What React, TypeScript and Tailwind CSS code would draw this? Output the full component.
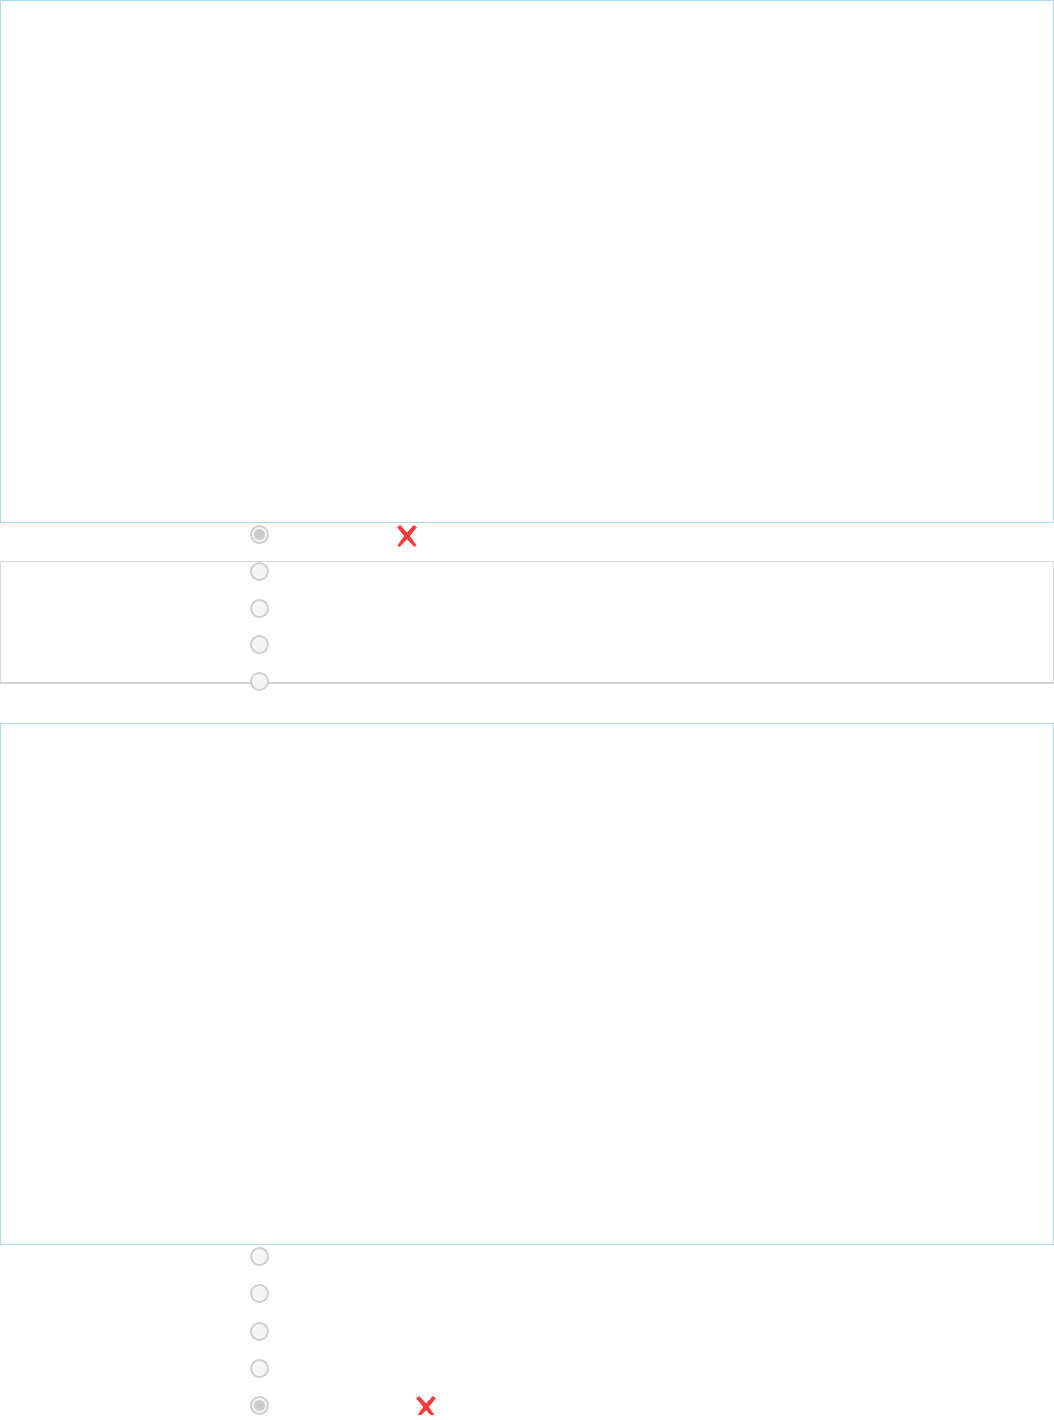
import React from "react";

function Radio({ checked }: { checked?: boolean }) {
  return (
    <span className="flex h-[19px] w-[19px] shrink-0 items-center justify-center rounded-full border-2 border-[#d0d0d0] bg-[#f5f5f5]">
      {checked ? <span className="h-[11px] w-[11px] rounded-full bg-[#cccccc]" /> : null}
    </span>
  );
}

function Cross({ className }: { className?: string }) {
  return (
    <svg className={className} width="20" height="22" viewBox="0 0 20 22" aria-hidden="true">
      <path
        d="M0 2.2 L3.2 0 L10 7.6 L16.8 0 L20 2.2 L12.8 11 L19.6 20.6 L17.4 22 L10 14.2 L2.6 22 L0.4 20.6 L7.2 11 Z"
        fill="#ff3b3b"
      />
    </svg>
  );
}

function Options({ checkedIndex, crossOffset, gap }: { checkedIndex: number; crossOffset: string; gap: string }) {
  const items = [0, 1, 2, 3, 4];
  return (
    <ul className={`relative z-10 flex flex-col pl-[250px] ${gap}`}>
      {items.map((i) => (
        <li key={i} className="flex h-[19px] items-center">
          <Radio checked={i === checkedIndex} />
          {i === checkedIndex ? <Cross className={crossOffset} /> : null}
        </li>
      ))}
    </ul>
  );
}

export default function App() {
  return (
    <div className="w-full bg-white font-['Liberation_Sans',sans-serif]">
      <div className="h-[523px] w-full border border-[#addbf1]" />
      <div className="relative pt-[2px]">
        <div className="absolute left-0 right-0 top-[38px] h-[123px] border border-b-2 border-[#d8d8d8] border-b-[#d3d3d3]" />
        <Options checkedIndex={0} crossOffset="ml-[128px] mt-[2px]" gap="gap-[17.75px]" />
      </div>
      <div className="mt-[32px] h-[522px] w-full border border-[#addbf1]" />
      <div className="pt-[2px]">
        <Options checkedIndex={4} crossOffset="ml-[147px] mt-[2px]" gap="gap-[18.25px]" />
      </div>
    </div>
  );
}
